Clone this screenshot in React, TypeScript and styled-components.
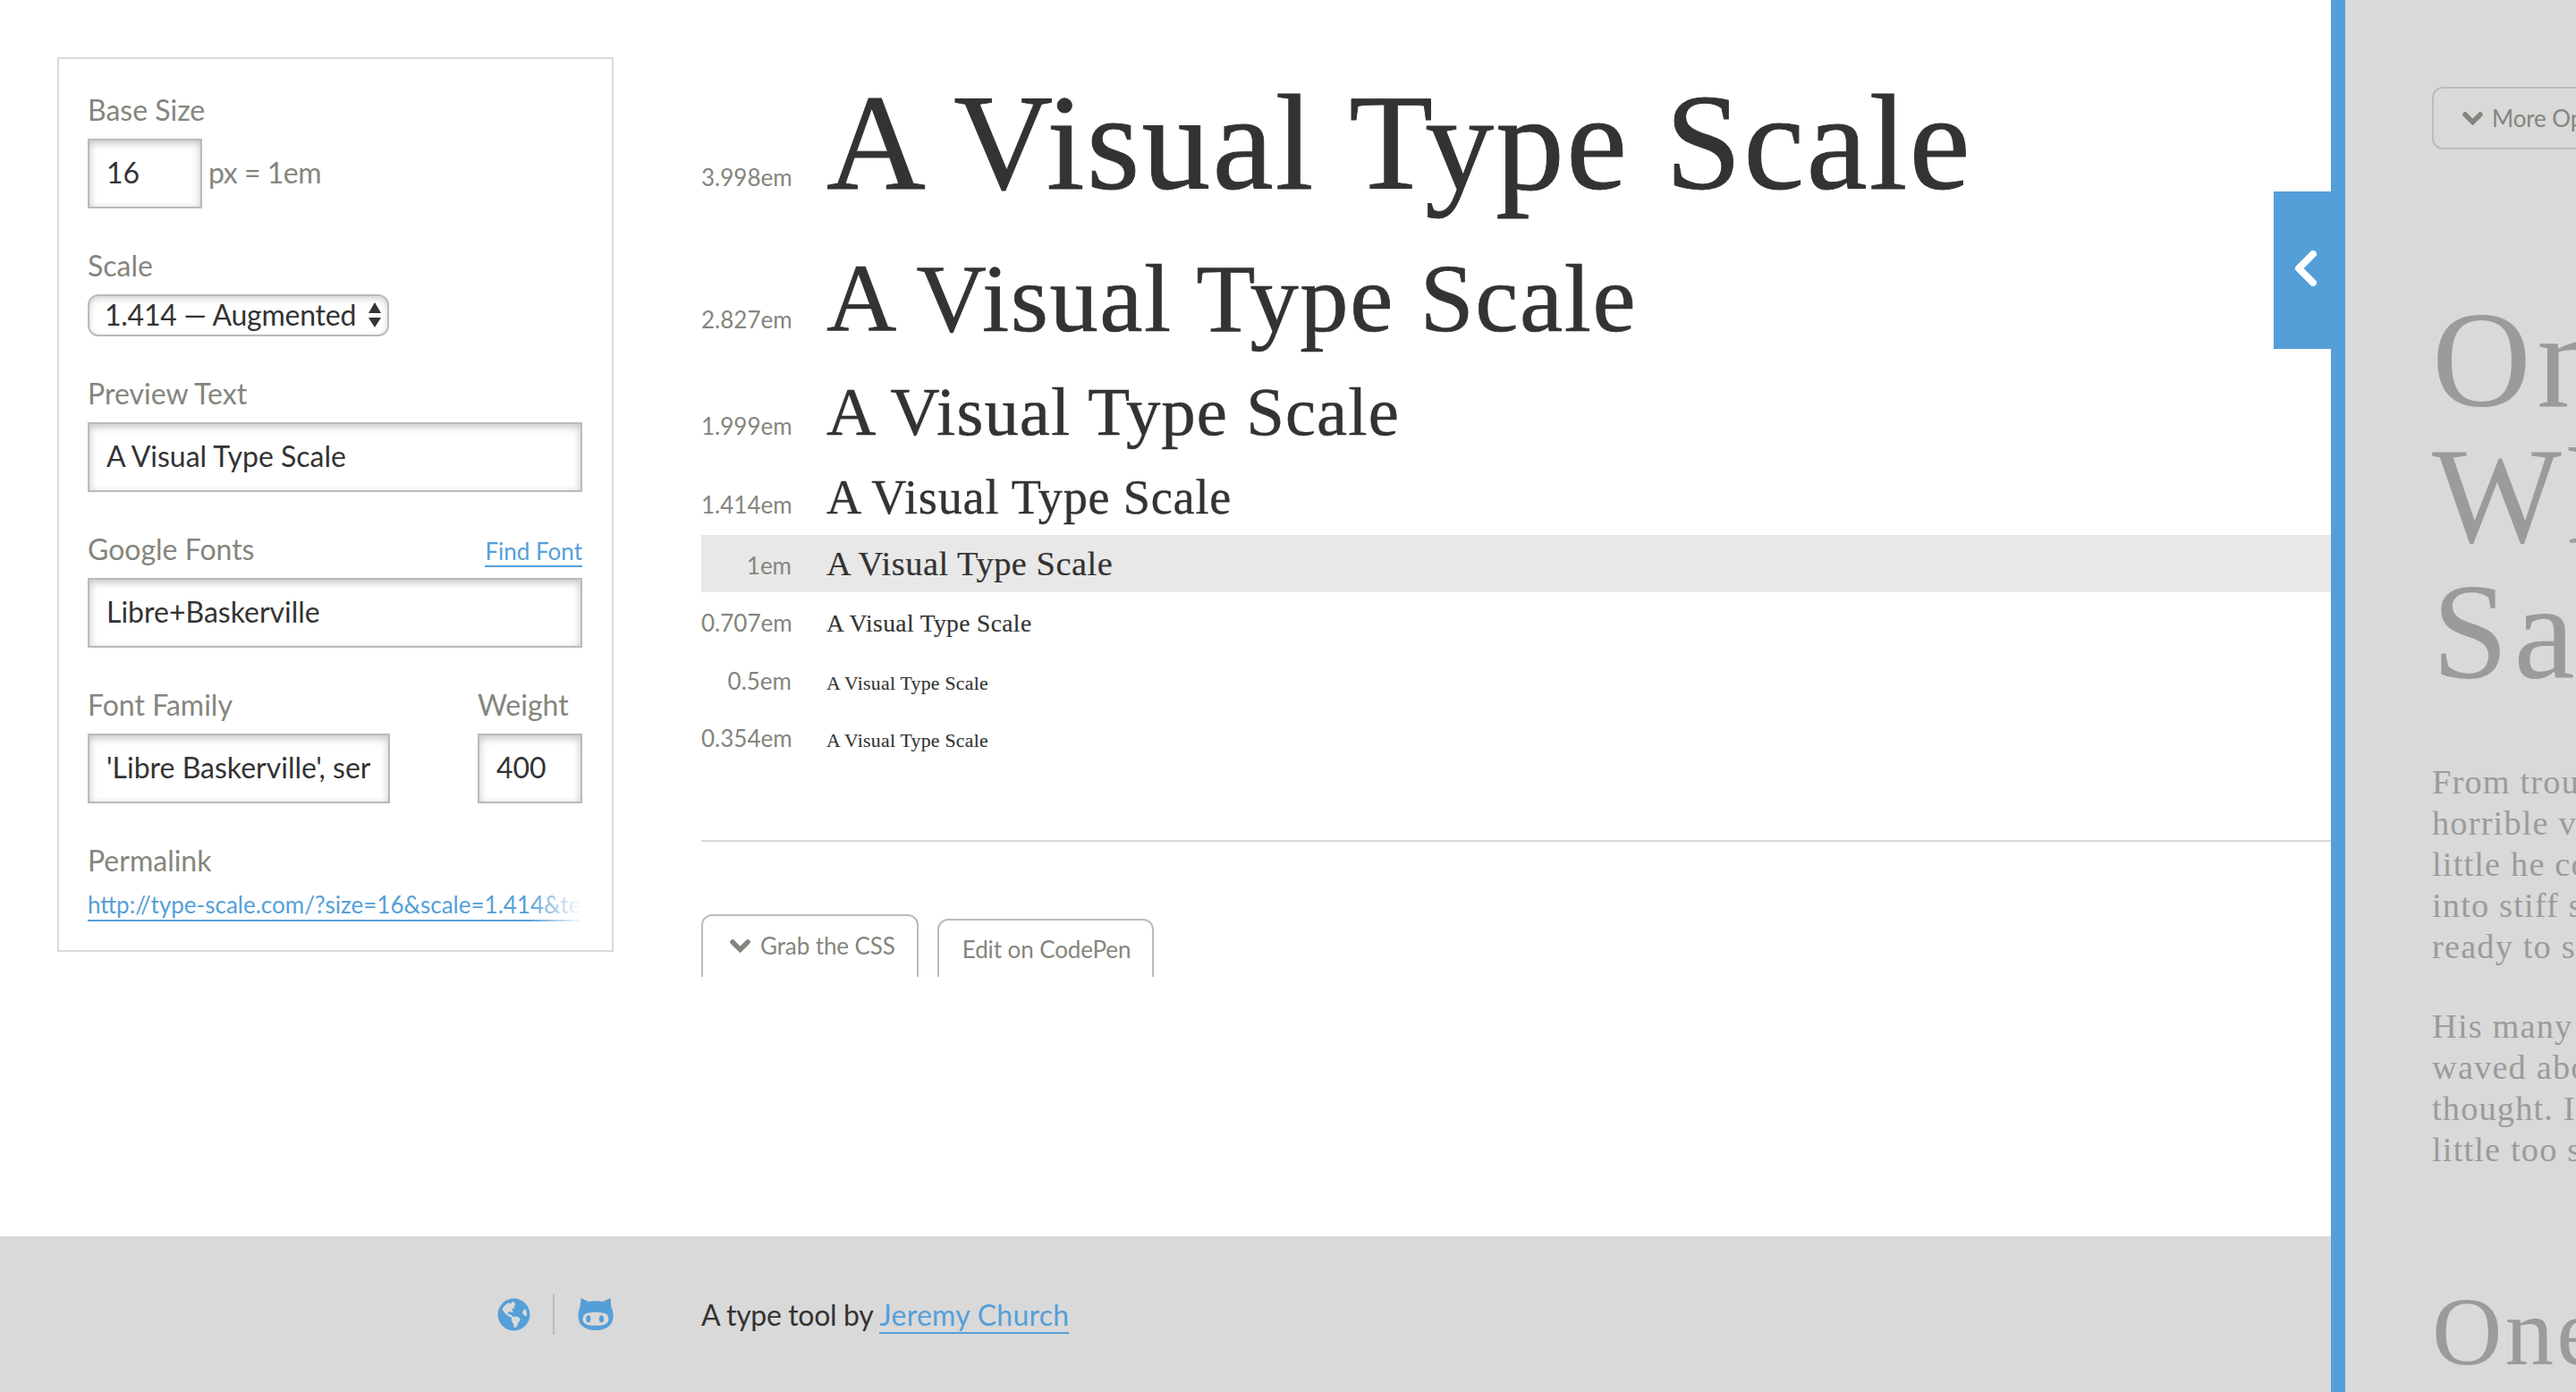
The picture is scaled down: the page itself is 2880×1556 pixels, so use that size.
import React from 'react';
import styled, { createGlobalStyle } from 'styled-components';
import { FaGlobeAmericas } from 'react-icons/fa';

const BLUE = '#559fd9';

const GlobalStyle = createGlobalStyle`
  html, body {
    margin: 0;
    padding: 0;
    background: #fff;
  }
  body {
    font-family: Lato, "Liberation Sans", sans-serif;
    color: #333;
  }
  * {
    box-sizing: border-box;
  }
`;

const Page = styled.div`
  display: flex;
  width: 2880px;
  height: 1556px;
  overflow: hidden;
`;

const Main = styled.div`
  display: flex;
  flex-direction: column;
  width: 2606px;
  flex-shrink: 0;
`;

const Content = styled.div`
  display: flex;
  align-items: flex-start;
  height: 1382px;
  padding-left: 64px;
`;

const Sidebar = styled.form`
  width: 622px;
  flex-shrink: 0;
  margin-top: 64px;
  padding: 38px 33px 32px 32px;
  border: 2px solid #d9d9d9;
`;

const Field = styled.div`
  margin-bottom: ${(p: { $last?: boolean }) => (p.$last ? 0 : 45)}px;
`;

const FieldSplit = styled.div`
  display: flex;
  justify-content: space-between;
  margin-bottom: 45px;
`;

const LabelRow = styled.div`
  display: flex;
  justify-content: space-between;
  align-items: baseline;
`;

const Label = styled.label`
  display: block;
  height: 40px;
  margin-bottom: 11px;
  font-size: 32px;
  line-height: 38px;
  color: #85857d;
`;

const TextInput = styled.input<{ $width: number }>`
  display: block;
  width: ${(p) => p.$width}px;
  height: 78px;
  padding: 0 20px 3px 19px;
  border: 2px solid #bababa;
  border-radius: 0;
  outline: none;
  background: #fff;
  box-shadow: inset 0 3px 10px rgba(0, 0, 0, 0.24);
  font-family: inherit;
  font-size: 32px;
  color: #333;
`;

const InlineRow = styled.div`
  display: flex;
  align-items: center;
  gap: 7px;
`;

const Unit = styled.span`
  margin-top: -4px;
  font-size: 32px;
  letter-spacing: -0.5px;
  color: #85857d;
`;

const SelectBox = styled.div`
  display: flex;
  align-items: center;
  justify-content: space-between;
  width: 337px;
  height: 47px;
  padding: 0 7px 2px 17px;
  border: 2px solid #bababa;
  border-radius: 12px;
  background: #fff;
  box-shadow: inset 0 3px 7px rgba(0, 0, 0, 0.18);
  font-size: 32px;
  letter-spacing: -0.25px;
  color: #333;
`;

const TextLink = styled.a<{ $size: number }>`
  font-size: ${(p) => p.$size}px;
  color: ${BLUE};
  text-decoration: none;
  border-bottom: 2px solid ${BLUE};
`;

const FadeLink = styled.a`
  position: relative;
  display: block;
  height: 36px;
  overflow: hidden;
  white-space: nowrap;
  font-size: 26px;
  line-height: 34px;
  color: ${BLUE};
  text-decoration: none;
  background: linear-gradient(${BLUE}, ${BLUE}) bottom / 100% 2px no-repeat;

  &::after {
    content: '';
    position: absolute;
    top: 0;
    right: 0;
    bottom: 0;
    width: 60px;
    background: linear-gradient(to right, rgba(255, 255, 255, 0), #fff);
  }
`;

const Preview = styled.div`
  flex: 1;
  margin-left: 98px;
  padding-top: 59px;
`;

const ScaleRow = styled.div<{ $height: number; $active?: boolean }>`
  display: flex;
  align-items: baseline;
  height: ${(p) => p.$height}px;
  line-height: ${(p) => p.$height}px;
  background: ${(p) => (p.$active ? '#e8e8e8' : 'transparent')};
`;

const ScaleLabel = styled.div<{ $lift: number }>`
  width: 101px;
  flex-shrink: 0;
  margin-right: 39px;
  text-align: right;
  font-size: 26px;
  color: #85857d;
  transform: translateY(${(p) => -p.$lift}px);
`;

const ScaleText = styled.div<{ $size: number }>`
  font-family: "Liberation Serif", serif;
  font-size: ${(p) => p.$size}px;
  letter-spacing: 0.0138em;
  -webkit-text-stroke: 0.006em #333;
  white-space: nowrap;
  color: #333;
`;

const Divider = styled.hr`
  height: 2px;
  margin: 82px 0 0;
  border: 0;
  background: #d9d9d9;
`;

const ButtonRow = styled.div`
  display: flex;
  align-items: flex-start;
  gap: 21px;
  height: 70px;
  margin-top: 81px;
  overflow: hidden;
`;

const GhostButton = styled.button<{ $offset?: number }>`
  display: flex;
  align-items: center;
  gap: 11px;
  height: 70px;
  margin-top: ${(p) => p.$offset ?? 0}px;
  padding: 0 24px 0 30px;
  border: 2px solid #bcbcb5;
  border-radius: 12px;
  background: transparent;
  font-family: inherit;
  font-size: 26px;
  letter-spacing: -0.1px;
  color: #85857d;
  white-space: nowrap;
  flex-shrink: 0;
`;

const ClippedButton = styled(GhostButton)`
  height: 90px;
  padding: 0 24px 21px 30px;
`;

const ClippedPlainButton = styled(ClippedButton)`
  padding: 0 24px 23px 26px;
`;

const Footer = styled.footer`
  display: flex;
  align-items: center;
  flex: 1;
  background: #d9d9d9;
`;

const FooterIcons = styled.div`
  display: flex;
  align-items: center;
  justify-content: flex-end;
  width: 784px;
  padding-right: 98px;
  color: ${BLUE};
`;

const IconDivider = styled.span`
  width: 2px;
  height: 46px;
  margin: 0 26px 0 25px;
  background: #bcbcbc;
`;

const FooterText = styled.div`
  font-size: 32px;
  letter-spacing: -0.35px;
  color: #333;

  a {
    letter-spacing: 0.25px;
  }
`;

const Pane = styled.aside`
  position: relative;
  flex: 1;
  padding: 97px 0 0 97px;
  border-left: 16px solid ${BLUE};
  background: #d9d9d9;
  color: #9b9b9b;
  white-space: nowrap;
`;

const PaneTab = styled.div`
  position: absolute;
  top: 214px;
  left: -80px;
  display: flex;
  align-items: center;
  width: 80px;
  height: 176px;
  padding: 0 0 5px 23px;
  background: ${BLUE};
`;

const PaneButton = styled(GhostButton)`
  width: 300px;
  gap: 10px;
  padding-left: 32px;
`;

const PaneHeading = styled.h1`
  margin: 159px 0 0;
  font-family: "Liberation Serif", serif;
  font-size: 153.5px;
  line-height: 152px;
  font-weight: 400;
  letter-spacing: 0.04em;
`;

const PaneParagraph = styled.p<{ $gap: number }>`
  margin: ${(p) => p.$gap}px 0 0;
  font-family: "Liberation Serif", serif;
  font-size: 38.4px;
  line-height: 46px;
  letter-spacing: 0.03em;
`;

const PaneSubheading = styled.h2`
  margin: 110px 0 0;
  font-family: "Liberation Serif", serif;
  font-size: 108.6px;
  line-height: 140px;
  font-weight: 400;
  letter-spacing: 0.03em;
`;

const ChevronDown = () => (
  <svg width="23" height="16" viewBox="0 0 23 16" fill="none">
    <path d="M3 4l8.500 8.500L20 4" stroke="#85857d" strokeWidth="5.500" strokeLinecap="round" strokeLinejoin="miter" />
  </svg>
);

const ChevronLeft = () => (
  <svg width="26" height="40" viewBox="0 0 26 40" fill="none">
    <path d="M21 4L5 20l16 16" stroke="#fff" strokeWidth="8" strokeLinecap="round" strokeLinejoin="round" />
  </svg>
);

const SelectArrows = () => (
  <svg width="14" height="28" viewBox="0 0 14 28" fill="#333">
    <path d="M7 0l7 12H0zM7 28L0 17h14z" />
  </svg>
);

const Octoface = () => (
  <svg width="40" height="36" viewBox="0 0 38 35" fill={BLUE}>
    <path
      fillRule="evenodd"
      d="M3 0l8 4c4-1 12-1 16 0l8-4 1 10c1.500 3 2 6 2 10 0 10-8 15-19 15S0 30 0 20c0-4 .5-7 2-10zM12 16c-4 0-7 2-7 7 0 5 5 7 14 7s14-2 14-7c0-5-3-7-7-7-4-1-10-1-14 0z"
    />
    <ellipse cx="11" cy="22.700" rx="2.500" ry="4" />
    <ellipse cx="25.300" cy="22.700" rx="2.500" ry="4" />
  </svg>
);

const PREVIEW = 'A Visual Type Scale';
const PERMALINK =
  'http://type-scale.com/?size=16&scale=1.414&text=A%20Visual%20Type%20Scale&font=Libre%2BBaskerville&fontweight=400&fontfamily=%27Libre%20Baskerville%27,%20serif';

const scaleRows = [
  { label: '3.998em', size: 153.5, height: 200, lift: 3 },
  { label: '2.827em', size: 108.6, height: 148, lift: 3 },
  { label: '1.999em', size: 76.8, height: 108, lift: 0 },
  { label: '1.414em', size: 54.3, height: 83, lift: 0 },
  { label: '1em', size: 38.4, height: 64, lift: 1, active: true },
  { label: '0.707em', size: 27.5, height: 68, lift: 0 },
  { label: '0.5em', size: 21.7, height: 63, lift: 0 },
  { label: '0.354em', size: 21.7, height: 64, lift: 0 },
];

const App: React.FC = () => {
  return (
    <Page>
      <GlobalStyle />
      <Main>
        <Content>
          <Sidebar>
            <Field>
              <Label>Base Size</Label>
              <InlineRow>
                <TextInput $width={128} defaultValue="16" />
                <Unit>px = 1em</Unit>
              </InlineRow>
            </Field>
            <Field>
              <Label>Scale</Label>
              <SelectBox>
                <span>1.414 — Augmented</span>
                <SelectArrows />
              </SelectBox>
            </Field>
            <Field>
              <Label>Preview Text</Label>
              <TextInput $width={553} defaultValue={PREVIEW} />
            </Field>
            <Field>
              <LabelRow>
                <Label>Google Fonts</Label>
                <TextLink $size={26}>Find Font</TextLink>
              </LabelRow>
              <TextInput $width={553} defaultValue="Libre+Baskerville" />
            </Field>
            <FieldSplit>
              <div>
                <Label>Font Family</Label>
                <TextInput $width={338} defaultValue="'Libre Baskerville', serif" />
              </div>
              <div>
                <Label>Weight</Label>
                <TextInput $width={117} defaultValue="400" />
              </div>
            </FieldSplit>
            <Field $last>
              <Label>Permalink</Label>
              <FadeLink>{PERMALINK}</FadeLink>
            </Field>
          </Sidebar>
          <Preview>
            {scaleRows.map((row) => (
              <ScaleRow key={row.label} $height={row.height} $active={row.active}>
                <ScaleLabel $lift={row.lift}>{row.label}</ScaleLabel>
                <ScaleText $size={row.size}>{PREVIEW}</ScaleText>
              </ScaleRow>
            ))}
            <Divider />
            <ButtonRow>
              <ClippedButton>
                <ChevronDown />
                Grab the CSS
              </ClippedButton>
              <ClippedPlainButton $offset={5}>Edit on CodePen</ClippedPlainButton>
            </ButtonRow>
          </Preview>
        </Content>
        <Footer>
          <FooterIcons>
            <FaGlobeAmericas size={37} />
            <IconDivider />
            <Octoface />
          </FooterIcons>
          <FooterText>
            A type tool by <TextLink $size={32}>Jeremy Church</TextLink>
          </FooterText>
        </Footer>
      </Main>
      <Pane>
        <PaneTab>
          <ChevronLeft />
        </PaneTab>
        <PaneButton>
          <ChevronDown />
          More Options
        </PaneButton>
        <PaneHeading>
          One Morning,
          <br />
          When Gregor
          <br />
          Samsa Woke
        </PaneHeading>
        <PaneParagraph $gap={69}>
          From troubled dreams, he found himself
          <br />
          horrible vermin. He lay on his armour-like
          <br />
          little he could see his brown belly, slightly
          <br />
          into stiff sections. The bedding was hardly
          <br />
          ready to slide off any moment.
        </PaneParagraph>
        <PaneParagraph $gap={43}>
          His many legs, pitifully thin compared
          <br />
          waved about helplessly as he looked.
          <br />
          thought. It wasn't a dream. His room,
          <br />
          little too small, lay peacefully between
        </PaneParagraph>
        <PaneSubheading>One Morning</PaneSubheading>
      </Pane>
    </Page>
  );
};

export default App;
